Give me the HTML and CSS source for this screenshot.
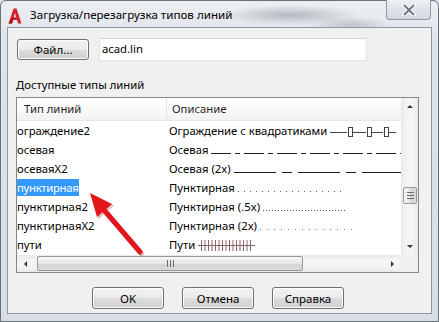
FILE: index.html
```html
<!DOCTYPE html>
<html lang="ru">
<head>
  <meta charset="UTF-8">
  <title>Загрузка/перезагрузка типов линий</title>
  <link rel="stylesheet" href="styles.css">
</head>
<body>

  <div class="window">
    <div class="titlebar">
      <svg class="app-icon" width="14" height="16" viewBox="0 0 14 16">
        <path d="M0.5 15.5 L5.5 0.5 L8.5 0.5 L13.5 15.5 L10 15.5 L9 12 L5 12 L4 15.5 Z M5.8 9.2 L8.2 9.2 L7 5 Z" fill="#d3232b" fill-rule="evenodd"/>
        <path d="M0.5 15.5 L4 15.5 L5 12 L6 12 L5.3 9.2 Z" fill="#9c1219"/>
      </svg>
      <span class="title">Загрузка/перезагрузка типов линий</span>
      <div class="close-btn">
        <svg width="14" height="12" viewBox="0 0 14 12">
          <path d="M2 1 L12 11 M12 1 L2 11" stroke="#fff" stroke-width="4" stroke-linecap="square"/>
          <path d="M2 1 L12 11 M12 1 L2 11" stroke="#6f7780" stroke-width="2"/>
        </svg>
      </div>
    </div>

    <div class="client">
      <div class="file-row">
        <button class="btn file-btn">Файл...</button>
        <div class="file-field">acad.lin</div>
      </div>

      <div class="group-label">Доступные типы линий</div>

      <div class="listbox">
        <div class="list-body">
          <div class="list-head">
            <div class="col1">Тип линий</div>
            <div class="col2">Описание</div>
          </div>
          <div class="row">
            <div class="col1">ограждение2</div>
            <div class="col2">Ограждение с квадратиками <svg class="fence" width="66" height="12" viewBox="0 0 66 12">
              <g stroke="#444" stroke-width="1" fill="none">
                <path d="M0 7.5 H17 M23 7.5 H36 M42 7.5 H53 M59 7.5 H66"/>
                <rect x="18.5" y="2.5" width="4" height="9"/>
                <rect x="37.5" y="2.5" width="4" height="9"/>
                <rect x="54.5" y="2.5" width="4" height="9"/>
              </g>
            </svg></div>
          </div>
          <div class="row">
            <div class="col1">осевая</div>
            <div class="col2">Осевая <span class="pat center"></span></div>
          </div>
          <div class="row">
            <div class="col1">осеваяX2</div>
            <div class="col2">Осевая (2x) <span class="pat center2"></span></div>
          </div>
          <div class="row">
            <div class="col1"><span class="sel">пунктирная</span></div>
            <div class="col2">Пунктирная <span class="pat dots-a"></span></div>
          </div>
          <div class="row">
            <div class="col1">пунктирная2</div>
            <div class="col2">Пунктирная (.5x) <span class="pat dots-b"></span></div>
          </div>
          <div class="row">
            <div class="col1">пунктирнаяX2</div>
            <div class="col2">Пунктирная (2x) <span class="pat dots-c"></span></div>
          </div>
          <div class="row">
            <div class="col1">пути</div>
            <div class="col2">Пути <svg class="tracks" width="57" height="12" viewBox="0 0 57 12">
              <path d="M0 6.5 H57" stroke="#8a6666" stroke-width="1"/>
              <path d="M3.5 1 V12 M7 1 V12 M10.5 1 V12 M14 1 V12 M17.5 1 V12 M21 1 V12 M24.5 1 V12 M28 1 V12 M31.5 1 V12 M35 1 V12 M38.5 1 V12 M42 1 V12 M45.5 1 V12 M49 1 V12 M52.5 1 V12" stroke="#8a6464" stroke-width="1"/>
            </svg></div>
          </div>
        </div>

        <div class="vscroll">
          <div class="sb-arrow"><span class="tri up"></span></div>
          <div class="sb-track v-track"><div class="thumb v-thumb"><span class="grip h-grip"></span></div></div>
          <div class="sb-arrow"><span class="tri down"></span></div>
        </div>

        <div class="hscroll">
          <div class="sb-arrow"><span class="tri left"></span></div>
          <div class="sb-track h-track"><div class="thumb h-thumb"><span class="grip v-grip"></span></div></div>
          <div class="sb-arrow"><span class="tri right"></span></div>
        </div>

        <div class="corner"></div>
      </div>

      <div class="buttons">
        <button class="btn">OK</button>
        <button class="btn">Отмена</button>
        <button class="btn">Справка</button>
      </div>
    </div>

    <svg class="arrow" width="439" height="322" viewBox="0 0 439 322">
      <g transform="translate(1.5,1.5)" fill="#7a1010" stroke="#7a1010" opacity="0.25">
        <path d="M104 210 L140 252" stroke-width="5" stroke-linecap="round"/>
        <path d="M90 193 L112 204 L97 217 Z"/>
      </g>
      <path d="M104 210 L140 252" stroke="#e3161d" stroke-width="5" stroke-linecap="round"/>
      <path d="M90 193 L112 204 L97 217 Z" fill="#e3161d"/>
    </svg>
  </div>

</body>
</html>
```

FILE: styles.css
```css
body {
  margin: 0;
  padding: 0;
  font-family: 'Noto Sans', 'Liberation Sans', sans-serif;
  font-size: 11.3px;
  color: #000;
  background: #dfe4ea;
}

.window {
  position: relative;
  width: 439px;
  height: 322px;
  box-sizing: border-box;
  border: 1px solid #69717b;
  border-radius: 6px 6px 0 0;
  display: flex;
  flex-direction: column;
  background:
    radial-gradient(ellipse 70px 10px at 290px 14px, rgba(120, 125, 135, 0.45), transparent),
    radial-gradient(ellipse 40px 8px at 350px 24px, rgba(120, 125, 135, 0.35), transparent),
    linear-gradient(#eceff2, #dfe4ea 40px, #d9dee5);
}

.titlebar {
  height: 26px;
  display: flex;
  align-items: flex-start;
  padding-left: 7px;
}

.app-icon {
  margin-top: 7px;
  flex: none;
}

.title {
  margin: 6px 0 0 8px;
  line-height: 16px;
  font-size: 11.6px;
  white-space: nowrap;
}

.close-btn {
  margin-left: auto;
  margin-right: 7px;
  margin-top: -1px;
  width: 45px;
  height: 20px;
  box-sizing: border-box;
  border: 1px solid #8b97a4;
  border-top: none;
  border-radius: 0 0 4px 4px;
  background: linear-gradient(#eef1f4, #dde2e8 50%, #d2d8df);
  display: flex;
  align-items: center;
  justify-content: center;
}

.client {
  margin: 0 6px;
  height: 287px;
  box-sizing: border-box;
  border: 1px solid #8c98a5;
  background: #f0f0f0;
}

.file-row {
  display: flex;
  align-items: flex-start;
  margin-top: 10px;
  padding-left: 9px;
  gap: 10px;
}

.btn {
  width: 72px;
  height: 22px;
  padding: 0;
  font-family: inherit;
  font-size: 11.5px;
  color: #000;
  border: 1px solid #707070;
  border-radius: 3px;
  background: linear-gradient(#f2f2f2, #ebebeb 50%, #dddddd 51%, #cfcfcf);
  box-shadow: inset 0 0 0 1px #fcfcfc;
}

.file-btn {
  height: 21px;
  margin-top: 1px;
}

.file-field {
  width: 268px;
  height: 23px;
  box-sizing: border-box;
  border: 1px solid #e2e3e4;
  border-top-color: #d4d5d6;
  background: #fff;
  padding: 2px 0 0 2px;
  line-height: 16px;
}

.group-label {
  margin-top: 16px;
  padding-left: 8px;
  line-height: 16px;
}

.listbox {
  margin: 4px 0 0 8px;
  width: 403px;
  height: 176px;
  box-sizing: border-box;
  border: 1px solid #828790;
  background: #fff;
  display: grid;
  grid-template-columns: 1fr 17px;
  grid-template-rows: 157px 17px;
}

.list-body {
  overflow: hidden;
}

.list-head {
  display: flex;
  height: 23px;
  box-sizing: border-box;
  border-bottom: 1px solid #e5e5e5;
  background: linear-gradient(#ffffff, #fafafa 50%, #f1f2f4);
  color: #1f1f1f;
  line-height: 22px;
}

.list-head .col1 {
  padding-left: 7px;
  border-right: 1px solid #e3e4e6;
}

.list-head .col2 {
  padding-left: 5px;
}

.col1 {
  width: 150px;
  box-sizing: border-box;
  flex: none;
  white-space: nowrap;
  overflow: hidden;
}

.col2 {
  flex: 1;
  white-space: nowrap;
  overflow: hidden;
}

.row {
  display: flex;
  height: 19px;
  line-height: 19px;
}

.row .col2 {
  padding-left: 2px;
}

.sel {
  display: inline-block;
  line-height: 17px;
  letter-spacing: -0.3px;
  padding-right: 1px;
  background: #3399ff;
  color: #fff;
}

.pat {
  display: inline-block;
  height: 10px;
  width: 240px;
  background-repeat: repeat-x;
  background-position: left bottom;
  background-size: 100% 1px;
}

.center {
  background-image: repeating-linear-gradient(to right, #222 0 20px, transparent 20px 24px, #222 24px 29px, transparent 29px 33px);
}

.center2 {
  background-image: repeating-linear-gradient(to right, #222 0 42px, transparent 42px 48px, #222 48px 58px, transparent 58px 64px);
}

.dots-a {
  width: 103px;
  background-image: repeating-linear-gradient(to right, #555 0 1px, transparent 1px 6px);
}

.dots-b {
  width: 84px;
  background-image: repeating-linear-gradient(to right, #555 0 1px, transparent 1px 3px);
}

.dots-c {
  width: 98px;
  background-image: repeating-linear-gradient(to right, #888 0 1px, transparent 1px 7px);
}

.fence,
.tracks {
  vertical-align: -2px;
}

.vscroll {
  grid-column: 2;
  grid-row: 1;
  display: flex;
  flex-direction: column;
  background: linear-gradient(to right, #e8e8e8, #f4f4f4 30%, #f4f4f4 70%, #e8e8e8);
}

.hscroll {
  grid-column: 1;
  grid-row: 2;
  display: flex;
  background: linear-gradient(#e8e8e8, #f4f4f4 30%, #f4f4f4 70%, #e8e8e8);
}

.corner {
  grid-column: 2;
  grid-row: 2;
  background: #f0f0f0;
}

.sb-arrow {
  flex: none;
  width: 17px;
  height: 17px;
  display: flex;
  align-items: center;
  justify-content: center;
}

.sb-track {
  flex: 1;
  display: flex;
}

.v-track {
  flex-direction: column;
}

.thumb {
  box-sizing: border-box;
  border: 1px solid #979797;
  border-radius: 2px;
  display: flex;
  align-items: center;
  justify-content: center;
}

.h-thumb {
  margin: 1px 0 1px 3px;
  width: 266px;
  background: linear-gradient(#f6f6f6, #e6e6e6 50%, #d6d6d6 51%, #d9d9d9);
}

.v-thumb {
  margin: 72px 1px 0 2px;
  height: 17px;
  background: linear-gradient(to right, #f6f6f6, #e6e6e6 50%, #d6d6d6 51%, #d9d9d9);
}

.grip {
  display: block;
}

.v-grip {
  width: 7px;
  height: 7px;
  background: repeating-linear-gradient(to right, #6d6d6d 0 1px, transparent 1px 3px);
}

.h-grip {
  width: 7px;
  height: 7px;
  background: repeating-linear-gradient(#6d6d6d 0 1px, transparent 1px 3px);
}

.tri {
  width: 0;
  height: 0;
  border: 3px solid transparent;
}

.tri.up {
  border-bottom: 3px solid #333;
  border-top: none;
}

.tri.down {
  border-top: 3px solid #333;
  border-bottom: none;
}

.tri.left {
  border-right: 3px solid #333;
  border-left: none;
}

.tri.right {
  border-left: 3px solid #333;
  border-right: none;
}

.buttons {
  display: flex;
  gap: 18px;
  margin-top: 14px;
  padding-left: 84px;
}

.arrow {
  position: absolute;
  left: -1px;
  top: -1px;
  pointer-events: none;
}
```
